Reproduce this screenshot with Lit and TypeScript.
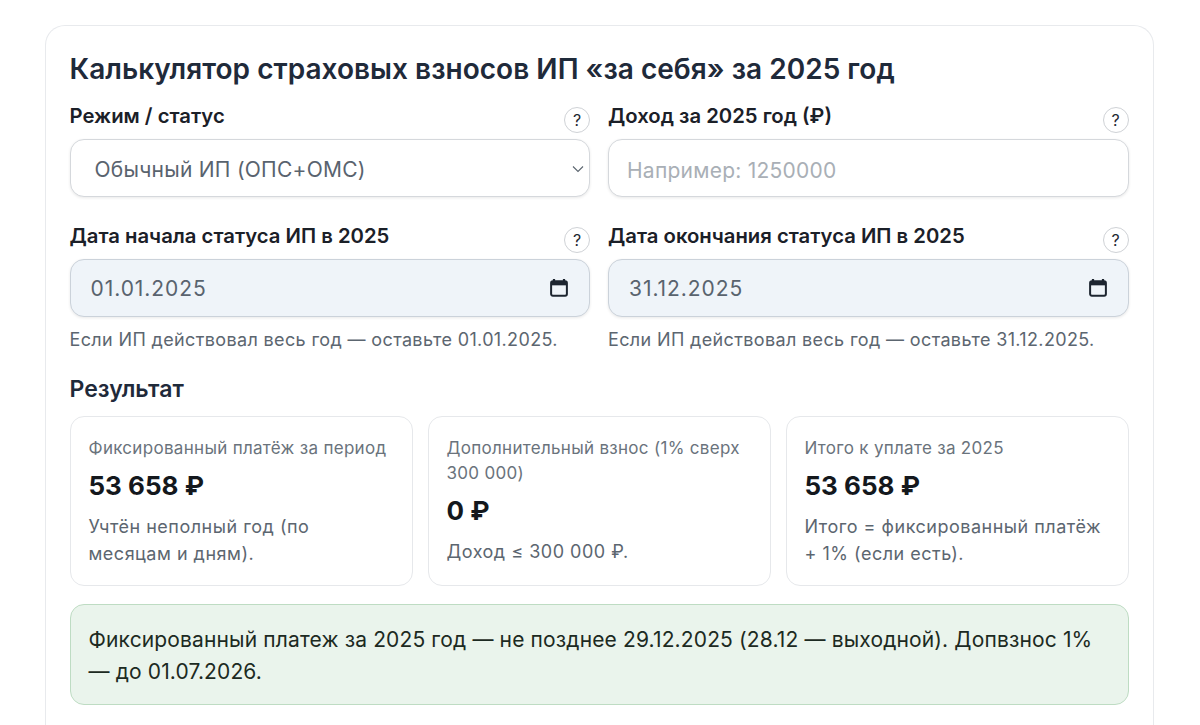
import { LitElement, html, css } from "lit";
import { customElement } from "lit/decorators.js";

const calendarIcon = html`<svg class="cal" viewBox="0 0 18 18" width="20" height="20">
  <path d="M4.5 1v2M13.5 1v2" stroke="#1d2530" stroke-width="2" fill="none"/>
  <rect x="1.9" y="3" width="14.2" height="13" rx="1.6" fill="none" stroke="#1d2530" stroke-width="1.8"/>
  <rect x="1.9" y="3" width="14.2" height="3.6" fill="#1d2530"/>
</svg>`;

const chevronIcon = html`<svg class="chev" viewBox="0 0 12 8" width="12" height="8">
  <path d="M1 1.5l5 5 5-5" stroke="#5a646e" stroke-width="1.1" fill="none"/>
</svg>`;

@customElement("app-root")
export class AppRoot extends LitElement {
  static styles = css`
    :host {
      display: block;
      height: 725px;
      overflow: hidden;
      background: #fff;
      font-family: Inter, "Noto Sans", sans-serif;
      color: #1f2933;
    }
    .page {
      padding: 25px 46px 0 45px;
    }
    .card {
      border: 1.5px solid #e8eaed;
      border-bottom: none;
      border-radius: 20px 20px 0 0;
      padding: 25px 24.5px 40px 23.5px;
    }
    h1 {
      margin: 0;
      font-size: 28px;
      line-height: 36px;
      font-weight: 600;
      color: #1f2a3a;
      letter-spacing: 0.03px;
    }
    .grid {
      display: grid;
      grid-template-columns: 1fr 1fr;
      column-gap: 18px;
      margin-top: 17px;
    }
    .field {
      display: flex;
      flex-direction: column;
      min-width: 0;
    }
    .label-row {
      display: flex;
      justify-content: space-between;
      height: 35px;
    }
    label {
      font-size: 20.3px;
      line-height: 24px;
      font-weight: 600;
      color: #1b2028;
    }
    .help {
      width: 26px;
      height: 26px;
      box-sizing: border-box;
      margin-top: 3px;
      border: 1.5px solid #cfd2d6;
      border-radius: 50%;
      display: flex;
      align-items: center;
      justify-content: center;
      font-size: 16px;
      font-weight: 400;
      color: #1f2933;
      background: #fff;
    }
    .control {
      position: relative;
      height: 58px;
      box-sizing: border-box;
      border: 1.5px solid #d5d8dc;
      border-radius: 14px;
      background: #fff;
      box-shadow: 0 1px 3px rgba(0, 0, 0, 0.09);
    }
    .control.date {
      background: #eff4f9;
      border-color: #cbd2da;
    }
    .control select,
    .control input {
      width: 100%;
      height: 100%;
      box-sizing: border-box;
      border: none;
      outline: none;
      background: transparent;
      appearance: none;
      font-family: inherit;
      font-size: 21px;
      letter-spacing: 0.25px;
      color: #59636e;
      padding: 3px 0 0 24px;
    }
    .control.date input {
      padding: 0 0 0 20px;
      letter-spacing: 0.95px;
    }
    .control input::placeholder {
      color: #a9afb6;
      opacity: 1;
    }
    .income input {
      padding: 5px 0 0 18px;
    }
    .chev {
      position: absolute;
      right: 5px;
      top: 25px;
    }
    .cal {
      position: absolute;
      right: 20px;
      top: 17.5px;
    }
    .hint {
      margin-top: 11px;
      font-size: 18px;
      line-height: 24px;
      letter-spacing: 0.36px;
      color: #5c6670;
      white-space: nowrap;
    }
    .spaced {
      margin-top: 27px;
    }
    h2 {
      margin: 23px 0 0;
      font-size: 23px;
      line-height: 28px;
      font-weight: 600;
      color: #1f2a3a;
    }
    .results {
      display: grid;
      grid-template-columns: repeat(3, 1fr);
      gap: 15px;
      margin-top: 13px;
    }
    .result {
      box-sizing: border-box;
      height: 170px;
      padding: 19px 18px 0;
      border: 1.5px solid #e6e8eb;
      border-radius: 14px;
    }
    .result .name {
      font-size: 17px;
      line-height: 25px;
      letter-spacing: 0.3px;
      color: #6a737c;
    }
    .result .sum {
      margin-top: 9px;
      font-size: 26px;
      line-height: 32px;
      font-weight: 700;
      color: #14181d;
    }
    .result .note {
      margin-top: 11px;
      font-size: 18px;
      line-height: 27px;
      letter-spacing: 0.5px;
      color: #5c6670;
    }
    .notice {
      margin-top: 18px;
      padding: 18.5px 18px 0;
      box-sizing: border-box;
      height: 101px;
      border: 1.5px solid #bedcc3;
      border-radius: 14px;
      background: #eaf4ec;
      font-size: 21px;
      line-height: 32px;
      letter-spacing: 0.14px;
      color: #1c2a22;
    }
  `;

  render() {
    return html`
      <div class="page">
        <section class="card">
          <h1>Калькулятор страховых взносов ИП «за себя» за 2025 год</h1>
          <div class="grid">
            <div class="field">
              <div class="label-row"><label>Режим / статус</label><span class="help">?</span></div>
              <div class="control">
                <select><option>Обычный ИП (ОПС+ОМС)</option></select>
                ${chevronIcon}
              </div>
            </div>
            <div class="field">
              <div class="label-row"><label>Доход за 2025 год (₽)</label><span class="help">?</span></div>
              <div class="control income"><input placeholder="Например: 1250000" /></div>
            </div>
            <div class="field spaced">
              <div class="label-row"><label>Дата начала статуса ИП в 2025</label><span class="help">?</span></div>
              <div class="control date"><input value="01.01.2025" />${calendarIcon}</div>
              <div class="hint">Если ИП действовал весь год — оставьте 01.01.2025.</div>
            </div>
            <div class="field spaced">
              <div class="label-row"><label>Дата окончания статуса ИП в 2025</label><span class="help">?</span></div>
              <div class="control date"><input value="31.12.2025" />${calendarIcon}</div>
              <div class="hint">Если ИП действовал весь год — оставьте 31.12.2025.</div>
            </div>
          </div>
          <h2>Результат</h2>
          <div class="results">
            <div class="result">
              <div class="name">Фиксированный платёж за период</div>
              <div class="sum">53 658 ₽</div>
              <div class="note">Учтён неполный год (по месяцам и дням).</div>
            </div>
            <div class="result">
              <div class="name">Дополнительный взнос (1% сверх 300 000)</div>
              <div class="sum">0 ₽</div>
              <div class="note">Доход ≤ 300 000 ₽.</div>
            </div>
            <div class="result">
              <div class="name">Итого к уплате за 2025</div>
              <div class="sum">53 658 ₽</div>
              <div class="note">Итого = фиксированный платёж + 1% (если есть).</div>
            </div>
          </div>
          <div class="notice">
            Фиксированный платеж за 2025 год — не позднее 29.12.2025 (28.12 — выходной). Допвзнос 1% — до 01.07.2026.
          </div>
        </section>
      </div>
    `;
  }
}
